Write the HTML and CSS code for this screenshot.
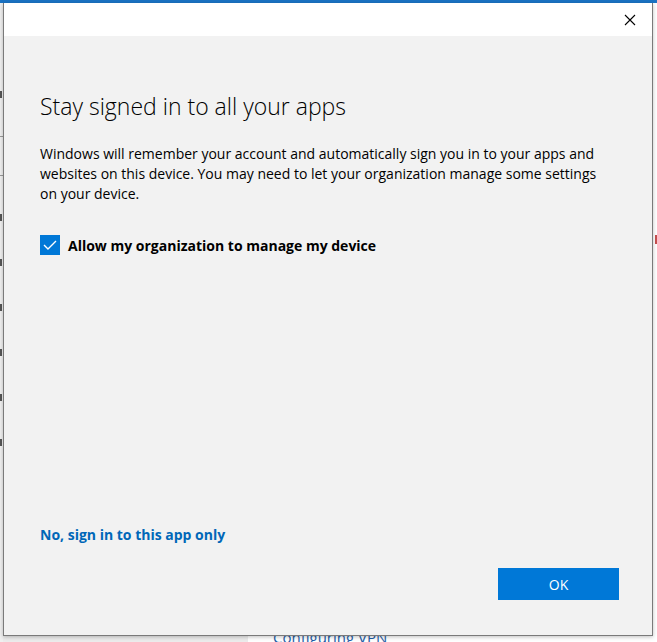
FILE: index.html
```html
<!DOCTYPE html>
<html lang="en">
<head>
<meta charset="utf-8">
<title>Stay signed in</title>
<link rel="stylesheet" href="styles.css">
</head>
<body>
<div class="desktop">
  <div class="bg-top"></div>
  <div class="bg-main">
    <div class="bg-side">
      <i></i><i class="line"></i><i class="line"></i><i></i><i></i><i></i><i></i><i></i><i></i>
    </div>
    <div class="bg-content">
      <div class="bg-right-mark"></div>
      <div class="bg-bottom"><span class="bg-side-foot"></span><span class="bg-link">Configuring VPN</span></div>
    </div>
  </div>

  <div class="dialog">
    <div class="titlebar">
      <svg class="close" width="12" height="12" viewBox="0 0 12 12"><path d="M1 1 L11 11 M11 1 L1 11" stroke="#000" stroke-width="1.1" fill="none"/></svg>
    </div>
    <div class="body">
      <h1 class="title">Stay signed in to all your apps</h1>
      <p class="desc">Windows will remember your account and automatically sign you in to your apps and websites on this device. You may need to let your organization manage some settings on your device.</p>
      <label class="check">
        <span class="box"><svg width="14" height="10" viewBox="0 0 14 10"><path d="M1 5 L5 9 L13 1" stroke="#fff" stroke-width="1.4" fill="none"/></svg></span>
        <span class="check-label">Allow my organization to manage my device</span>
      </label>
      <div class="spacer"></div>
      <a class="link" href="#">No, sign in to this app only</a>
      <div class="actions"><button class="ok">OK</button></div>
    </div>
  </div>
</div>
</body>
</html>
```
FILE: styles.css
```css
html, body {
  margin: 0;
  padding: 0;
}
body {
  width: 657px;
  height: 642px;
  overflow: hidden;
  font-family: "Segoe UI", "Open Sans", "Noto Sans", sans-serif;
  background: #ffffff;
}
.desktop {
  position: relative;
  width: 657px;
  height: 642px;
  display: flex;
  flex-direction: column;
}
.bg-top {
  height: 3px;
  background: #1b73c4;
}
.bg-main {
  flex: 1;
  display: flex;
}
.bg-side {
  width: 3px;
  background: #f0f0f0;
  display: flex;
  flex-direction: column;
  padding-top: 88px;
  gap: 38px;
}
.bg-side i {
  display: block;
  width: 2px;
  height: 7px;
  background: #555;
}
.bg-side i.line {
  height: 1px;
  width: 3px;
  background: #999;
}
.bg-content {
  flex: 1;
  display: flex;
  flex-direction: column;
  justify-content: flex-end;
  align-items: stretch;
}
.bg-right-mark {
  align-self: flex-end;
  width: 2px;
  height: 9px;
  background: #c65050;
  margin-bottom: 392px;
}
.bg-bottom {
  height: 6px;
  display: flex;
  overflow: hidden;
  align-items: flex-start;
}
.bg-side-foot {
  width: 245px;
  height: 6px;
  background: #ececec;
}
.bg-link {
  margin-left: 25px;
  margin-top: -9px;
  color: #1e5ea8;
  font-size: 15px;
}
.dialog {
  position: absolute;
  left: 3px;
  top: 3px;
  width: 648px;
  height: 632px;
  border: 1px solid #7a7a7a;
  border-top: none;
  background: #f2f2f2;
  display: flex;
  flex-direction: column;
  box-shadow: 0 1px 4px rgba(0,0,0,0.25);
}
.titlebar {
  height: 33px;
  background: #ffffff;
  display: flex;
  justify-content: flex-end;
  align-items: center;
  padding-right: 16px;
}
.close {
  display: block;
}
.body {
  flex: 1;
  display: flex;
  flex-direction: column;
  padding: 54px 33px 35px 36px;
}
.title {
  margin: 0;
  font-weight: 300;
  font-size: 23px;
  line-height: 32px;
  color: #000;
}
.desc {
  margin: 22px 0 0 0;
  font-size: 14px;
  line-height: 20px;
  color: #000;
  padding-right: 3px;
}
.check {
  margin-top: 31px;
  display: flex;
  align-items: center;
  gap: 8px;
}
.box {
  width: 20px;
  height: 20px;
  background: #0078d7;
  display: flex;
  align-items: center;
  justify-content: center;
}
.check-label {
  font-weight: 700;
  font-size: 14px;
  color: #000;
}
.spacer {
  flex: 1;
}
.link {
  font-size: 14px;
  font-weight: 700;
  color: #0067b8;
  text-decoration: none;
  line-height: 20px;
  align-self: flex-start;
}
.actions {
  margin-top: 23px;
  display: flex;
  justify-content: flex-end;
}
.ok {
  width: 121px;
  height: 32px;
  border: none;
  background: #0078d7;
  color: #fff;
  font-family: inherit;
  font-size: 14px;
}
```
